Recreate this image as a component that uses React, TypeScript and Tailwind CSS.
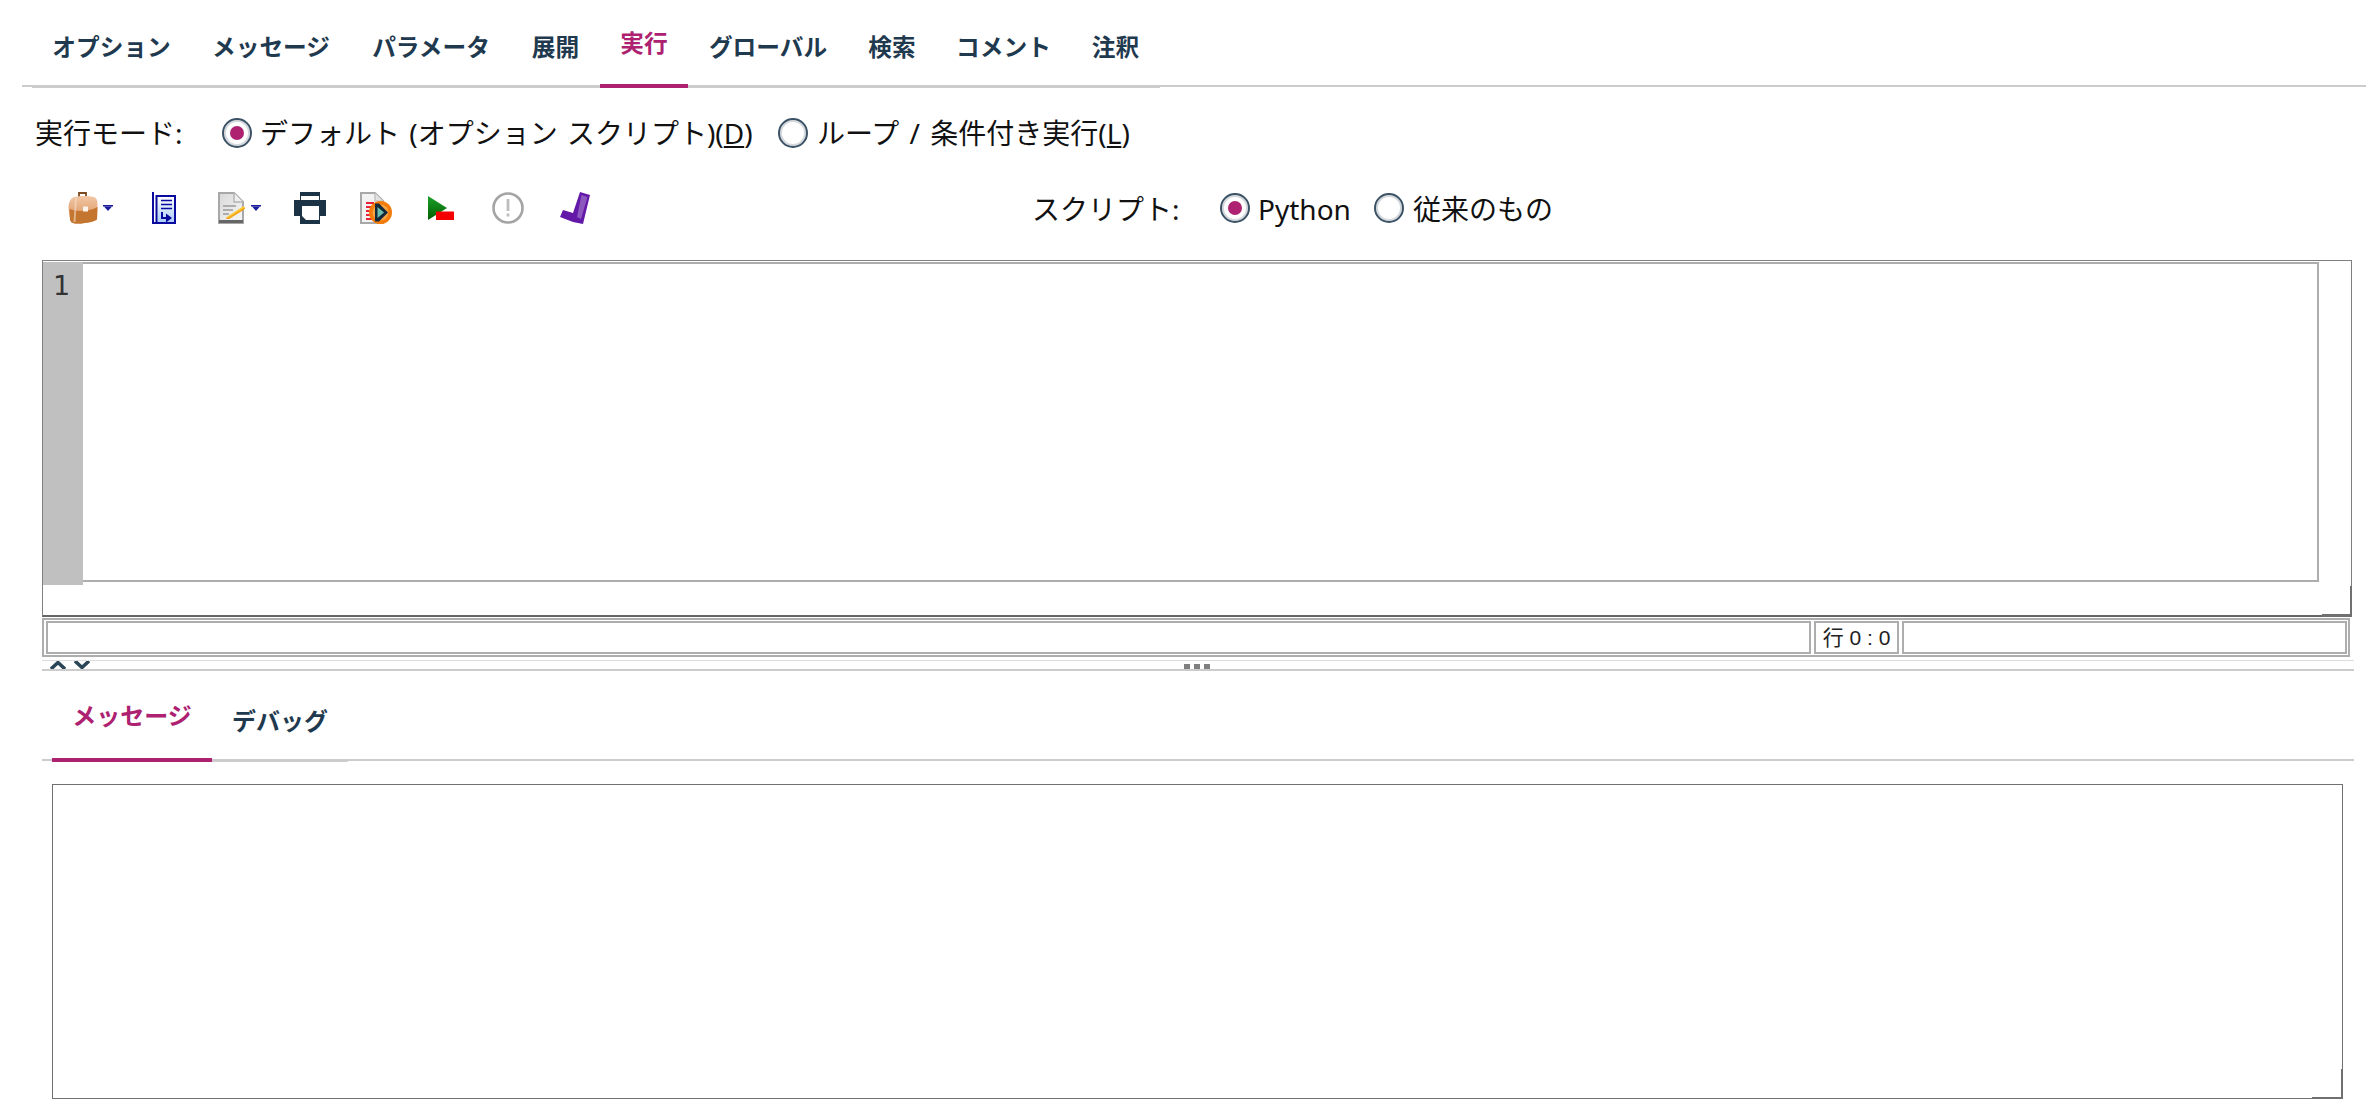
import React from "react";

const Tab = ({ label, w, active }: { label: string; w: string; active?: boolean }) => (
  <div
    className={
      active
        ? `${w} h-[88px] shrink-0 flex justify-center border-b-4 border-[#ad2170] text-[#ad2170] pt-[29px]`
        : `${w} h-[86px] shrink-0 flex justify-center text-[#1f3a4f] pt-[33px]`
    }
  >
    <span className="text-[23.7px] leading-[28px] font-bold whitespace-nowrap">{label}</span>
  </div>
);

const Radio = ({ on }: { on?: boolean }) => (
  <div className="w-[30px] h-[30px] shrink-0 rounded-full border-2 border-[#3b5266] bg-white shadow-[inset_0_0_0_2px_#d5d9dd] flex items-center justify-center">
    {on && <div className="w-[14px] h-[14px] rounded-full bg-[#ad2170]" />}
  </div>
);

const DropArrow = ({ cls }: { cls: string }) => (
  <svg className={`${cls} shrink-0`} width="10" height="6" viewBox="0 0 10 6">
    <rect x="0" y="0" width="10" height="1.5" fill="#1a1a9c" />
    <path d="M1 1.5H9L5 6Z" fill="#1a1a9c" />
  </svg>
);

const BagIcon = () => (
  <svg width="31" height="32" viewBox="0 0 31 32" className="shrink-0">
    <defs>
      <linearGradient id="bag" x1="0" y1="0" x2="0" y2="1">
        <stop offset="0" stopColor="#f2c8a6" />
        <stop offset="0.55" stopColor="#e3a678" />
        <stop offset="1" stopColor="#c77a3a" />
      </linearGradient>
    </defs>
    <path d="M11 5V1H18V5" fill="none" stroke="#7a4a22" strokeWidth="1.8" />
    <path d="M6 5C12 3.5 21 3.5 26 5C28.5 6 29.5 8 29.5 12L29 27C28.5 29 20 31.5 9 31.5C4 31.5 2.5 30 2 27L0.5 16C0.5 10 2.5 6.5 6 5Z" fill="url(#bag)" />
    <path d="M1.5 17C9 20 22 19.5 29.5 15L29 27C28.5 29 20 31.5 9 31.5C4 31.5 2.5 30 2 27Z" fill="#c4752f" />
    <rect x="15" y="14.5" width="5" height="5" fill="#fbf3ea" />
    <path d="M8 6L6.5 30" stroke="#f6dcc6" strokeWidth="2" opacity="0.6" />
  </svg>
);

const BookIcon = () => (
  <svg width="24" height="32" viewBox="0 0 24 32" className="shrink-0">
    <defs>
      <linearGradient id="bk" x1="0" y1="0" x2="0" y2="1">
        <stop offset="0" stopColor="#ffffff" />
        <stop offset="1" stopColor="#a9cdf7" />
      </linearGradient>
    </defs>
    <rect x="4.5" y="4" width="18.5" height="27" fill="url(#bk)" stroke="#0a0a9e" strokeWidth="2" />
    <path d="M1 0V31H8" fill="none" stroke="#0a0a9e" strokeWidth="2" />
    <path d="M9 8.5H20M9 12.5H20M9 16.5H20" stroke="#0a0a9e" strokeWidth="1.6" />
    <path d="M10 20V26H15" fill="none" stroke="#0a0a9e" strokeWidth="2" />
    <path d="M14 21.5L20 26L14 30.5Z" fill="#0a0a9e" />
  </svg>
);

const DocPencilIcon = () => (
  <svg width="27" height="32" viewBox="0 0 27 32" className="shrink-0">
    <defs>
      <linearGradient id="dc" x1="0" y1="0" x2="1" y2="1">
        <stop offset="0" stopColor="#d8d8d8" />
        <stop offset="1" stopColor="#f8f8f8" />
      </linearGradient>
    </defs>
    <path d="M1 1H16L25 10V31H1Z" fill="url(#dc)" stroke="#a8a8a8" strokeWidth="2" />
    <path d="M16 1V10H25" fill="#efefef" stroke="#b4b4b4" strokeWidth="1.4" />
    <path d="M5 14H18M5 18H15M5 22H11" stroke="#9a9a9a" strokeWidth="1.6" />
    <rect x="1" y="28" width="24" height="3" fill="#666" />
    <path d="M9 25L26 14L27 17L11 27L8 27Z" fill="#f5a012" />
    <path d="M9 25L26 14L26.5 15.5L9.5 26Z" fill="#fbd23f" />
  </svg>
);

const PrinterIcon = () => (
  <svg width="32" height="32" viewBox="0 0 32 32" className="shrink-0">
    <path d="M6 0H26V8H32V24H26V32H6V24H0V8H6Z" fill="#1b3344" />
    <rect x="7" y="4" width="18" height="4" fill="#fff" />
    <path d="M8 14H25V28H12L8 24Z" fill="#fff" />
  </svg>
);

const DocRunIcon = () => (
  <svg width="32" height="32" viewBox="0 0 32 32" className="shrink-0">
    <path d="M1 1H15L23 9V31H1Z" fill="#f2f2f2" stroke="#a8a8a8" strokeWidth="2" />
    <path d="M15 1V9H23" fill="#e2e2e2" stroke="#bbb" strokeWidth="1.2" />
    <path d="M6 11H14M6 15H12M6 19H11M6 23H12M6 27H14" stroke="#e8203a" strokeWidth="2" />
    <circle cx="20.5" cy="20.5" r="11.5" fill="#f57c0a" />
    <circle cx="20.5" cy="20.5" r="8" fill="#f9a544" />
    <path d="M15 11.5H19L28 20.5L19 29.5H15Z" fill="#14293a" />
    <path d="M17.5 15L24 20.5L17.5 26Z" fill="#6dbfae" />
  </svg>
);

const RunIcon = () => (
  <svg width="26" height="24" viewBox="0 0 26 24" className="shrink-0">
    <defs>
      <linearGradient id="rn" x1="0" y1="0" x2="0" y2="1">
        <stop offset="0" stopColor="#1fa02a" />
        <stop offset="1" stopColor="#005f00" />
      </linearGradient>
    </defs>
    <path d="M0 0L19 12L0 24Z" fill="url(#rn)" />
    <rect x="8" y="15.5" width="18" height="8.5" fill="#f50000" />
  </svg>
);

const InfoIcon = () => (
  <svg width="32" height="32" viewBox="0 0 32 32" className="shrink-0">
    <circle cx="16" cy="16" r="14.5" fill="#fff" stroke="#a4a4a4" strokeWidth="2.6" />
    <rect x="14.6" y="7" width="2.8" height="12" fill="#bdbdbd" />
    <rect x="14.6" y="21.5" width="2.8" height="3" fill="#bdbdbd" />
  </svg>
);

const CheckIcon = () => (
  <svg width="30" height="32" viewBox="0 0 30 32" className="shrink-0">
    <path d="M20 0L30 3L23 32L13 30L0 25L3 18L13 21Z" fill="#6318a8" />
    <path d="M21.5 3L27.5 5L21 27L17 25Z" fill="#8d58bd" />
  </svg>
);

export default function App() {
  return (
    <div className="w-[2366px] h-[1120px] bg-white overflow-hidden text-black font-['Noto_Sans','Noto_Sans_CJK_JP',sans-serif]">
      {/* top tabs */}
      <div className="ml-[22px] h-[87px] border-b-2 border-[#cccccc] box-border">
        <div className="ml-[10px] w-[1128px] h-[88px] border-b-2 border-[#cccccc] flex items-start">
          <Tab label="オプション" w="w-[159px]" />
          <Tab label="メッセージ" w="w-[160px]" />
          <Tab label="パラメータ" w="w-[160px]" />
          <Tab label="展開" w="w-[89px]" />
          <Tab label="実行" w="w-[88px]" active />
          <Tab label="グローバル" w="w-[160px]" />
          <Tab label="検索" w="w-[88px]" />
          <Tab label="コメント" w="w-[135px]" />
          <Tab label="注釈" w="w-[89px]" />
        </div>
      </div>

      {/* mode row */}
      <div className="mt-[28px] h-[36px] pl-[35px] flex items-center text-[28px] leading-[36px] text-[#111] whitespace-nowrap">
        <span className="w-[187px] shrink-0">実行モード:</span>
        <Radio on />
        <span className="ml-[8px] w-[518px] shrink-0 [word-spacing:2px]">
          デフォルト (オプション スクリプト)(<span className="underline">D</span>)
        </span>
        <Radio />
        <span className="ml-[9px] [word-spacing:3px]">
          ループ / 条件付き実行(<span className="underline">L</span>)
        </span>
      </div>

      {/* toolbar */}
      <div className="mt-[41px] h-[32px] pl-[68px] flex items-center text-[28px] text-[#111] whitespace-nowrap">
        <BagIcon />
        <DropArrow cls="ml-[4px]" />
        <div className="ml-[39px] flex"><BookIcon /></div>
        <div className="ml-[42px] flex"><DocPencilIcon /></div>
        <DropArrow cls="ml-[6px]" />
        <div className="ml-[33px] flex"><PrinterIcon /></div>
        <div className="ml-[34px] flex"><DocRunIcon /></div>
        <div className="ml-[36px] flex"><RunIcon /></div>
        <div className="ml-[38px] flex"><InfoIcon /></div>
        <div className="ml-[36px] flex"><CheckIcon /></div>
        <span className="ml-[442px] w-[188px] shrink-0 pt-[2px]">スクリプト:</span>
        <Radio on />
        <span className="ml-[8px] w-[116px] shrink-0 pt-[2px]">Python</span>
        <Radio />
        <span className="ml-[9px] pt-[2px]">従来のもの</span>
      </div>

      {/* editor */}
      <div className="relative mt-[36px] ml-[42px] w-[2310px] h-[357px] box-border border border-[#808080] border-b-2 border-b-[#666666] pt-[1px] bg-white">
        <div className="flex h-[323px] w-[2276px]">
          <div className="w-[40px] shrink-0 bg-[#c0c0c0] text-[27px] leading-[30px] text-[#333] pt-[9px] pl-[10px] font-['DejaVu_Sans',sans-serif]">
            1
          </div>
          <div className="flex-1 h-[320px] border-2 border-l-0 border-[#adadad] bg-white" />
        </div>
        <div className="absolute right-[-1px] bottom-[-2px] w-[30px] h-[31px] border-r-2 border-b-[3px] border-[#707070]" />
      </div>

      {/* status */}
      <div className="mt-[1px] ml-[42px] w-[2308px] h-[39px] box-border border-2 border-[#adadad] p-[1px] pl-[2px] flex gap-[3px] text-[21px] text-[#222]">
        <div className="flex-1 border-2 border-[#adadad]" />
        <div className="w-[85px] shrink-0 border-2 border-[#adadad] flex items-center justify-center whitespace-nowrap font-['Liberation_Sans','Noto_Sans_CJK_JP',sans-serif]">
          行 0 : 0
        </div>
        <div className="w-[445px] shrink-0 border-2 border-[#adadad]" />
      </div>

      {/* splitter */}
      <div className="relative mt-[3px] ml-[42px] w-[2312px] h-[11px] box-border border-t border-[#dddddd] border-b-2 border-b-[#cccccc] flex items-start">
        <svg className="ml-[8px] shrink-0" width="16" height="8" viewBox="0 0 16 8">
          <path d="M1 8L8 1.5L15 8" fill="none" stroke="#2a4557" strokeWidth="3.5" />
        </svg>
        <svg className="ml-[8px] shrink-0" width="16" height="8" viewBox="0 0 16 8">
          <path d="M1 0L8 6.5L15 0" fill="none" stroke="#2a4557" strokeWidth="3.5" />
        </svg>
        <div className="ml-[1094px] mt-[3px] flex gap-[4px]">
          <div className="w-[6px] h-[5px] bg-[#808080]" />
          <div className="w-[6px] h-[5px] bg-[#808080]" />
          <div className="w-[6px] h-[5px] bg-[#808080]" />
        </div>
      </div>

      {/* lower tabs */}
      <div className="ml-[42px] w-[2312px] h-[90px] border-b-2 border-[#cccccc] box-border">
        <div className="ml-[10px] w-[296px] h-[91px] border-b-2 border-[#cccccc] flex items-start">
          <div className="w-[160px] h-[91px] shrink-0 flex justify-center border-b-4 border-[#ad2170] text-[#ad2170] pt-[31px]">
            <span className="text-[24px] leading-[28px] font-bold whitespace-nowrap">メッセージ</span>
          </div>
          <div className="w-[136px] shrink-0 flex justify-center text-[#1f3a4f] pt-[36px]">
            <span className="text-[24px] leading-[28px] font-bold whitespace-nowrap">デバッグ</span>
          </div>
        </div>
      </div>

      {/* message box */}
      <div className="relative mt-[23px] ml-[52px] w-[2291px] h-[315px] box-border border border-[#707070] bg-white">
        <div className="absolute right-[-1px] bottom-[-1px] w-[31px] h-[30px] border-r-2 border-b-2 border-[#707070]" />
      </div>
    </div>
  );
}
